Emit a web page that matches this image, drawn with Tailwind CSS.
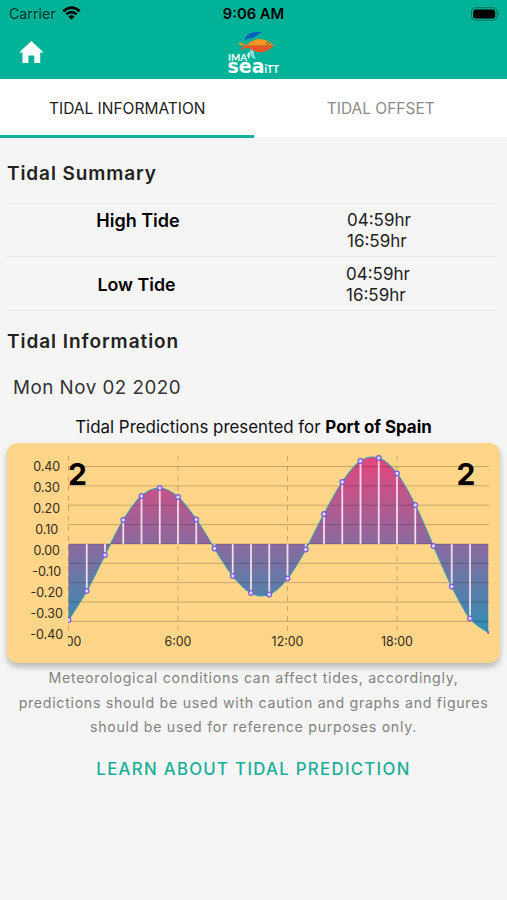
<!DOCTYPE html>
<html lang="en">
<head>
<meta charset="utf-8">
<title>Tidal Information</title>
<script src="https://cdn.jsdelivr.net/npm/@tailwindcss/browser@4"></script>
</head>
<body class="bg-[#f5f5f5] font-['Inter',sans-serif] text-black">
<main class="flex h-[900px] w-[507px] flex-col overflow-hidden">
  <header class="h-[79px] shrink-0 bg-[#00b398]">
    <div class="grid h-[27px] grid-cols-3 items-center px-[9px] text-[15px]">
      <div class="flex items-center gap-[6px] pt-[1px] text-[#10332e]"><span class="text-[14.2px]">Carrier</span>
        <svg class="-mt-[2px] h-[14px] w-[19px]" viewBox="0 0 19 14"><g fill="none" stroke="#000" stroke-width="2.7"><path d="M1.3 5.2Q9.5-2 17.7 5.2"/><path d="M4.3 8.3Q9.5 3.8 14.7 8.3"/></g><path d="M9.5 13.7L6.4 10.5Q9.5 8 12.6 10.5Z"/></svg>
      </div>
      <span class="pt-[2px] text-center text-[14.8px] font-semibold whitespace-nowrap">9:06 AM</span>
      <svg class="-mr-[2px] h-[14px] w-[30px] justify-self-end" viewBox="0 0 30 14"><rect x="1.5" y=".7" width="25.5" height="12.6" rx="3.8" fill="none" stroke="#07705f"/><rect x="3.2" y="2.5" width="22" height="9" rx="2.3"/><path d="M28 4.8Q30 7 28 9.2Z" fill="#07705f"/></svg>
    </div>
    <div class="grid h-[52px] grid-cols-3 px-[19px]">
      <svg class="mt-[14px] h-[23px] w-[25px]" viewBox="0 0 25 23"><path fill="#fff" d="M12.4 0L.1 11.5H3.5V22H9.4V14.5H15.3V22H21.2V11.5H24.6Z"/></svg>
      <svg class="h-[52px] w-[60px] justify-self-center" viewBox="-3 0 60 52">
        <path fill="#0b62bd" d="M18.500 14C19 8 25 3.500 36 5.500C31 7.500 30 10.500 25 11Q21 11.500 18.500 14Z"/>
        <path fill="#8ce0dc" d="M24.500 22L28 24Q27 28 30 32L26.500 31L24 26Z"/><path fill="#c7f4ef" d="M21 28Q23 23 24 26V30L22.500 32Z"/>
        <path fill="#f79420" d="M13 15L16 16L20.500 18Q33 6 48 18.500H18L13.500 18Z"/>
        <path fill="#ef5423" d="M14 23L18 18.500H48Q36 31 22 20.500L18 22Z"/>
        <circle cx="42" cy="16.300" r="1.500" fill="#7b5c28"/><circle cx="42" cy="16.300" r=".6" fill="#fff"/>
        <g fill="#fff" font-family="Lato,sans-serif" font-weight="700"><text x="2" y="33.500" font-size="10" textLength="19" lengthAdjust="spacingAndGlyphs">IMA</text><text x="1.500" y="46" font-family="DejaVu Sans" font-size="20" textLength="37" lengthAdjust="spacingAndGlyphs">sea</text><text x="38.500" y="46" font-size="12" textLength="14.500" lengthAdjust="spacingAndGlyphs">iTT</text></g>
      </svg>
    </div>
  </header>
  <nav class="grid h-[59px] shrink-0 grid-cols-2 bg-white text-center text-[15.5px] leading-[56px]">
    <div class="border-b-[3px] border-[#15b09b] pt-[3px] pl-[1px] leading-[53px] text-[#222]">TIDAL INFORMATION</div>
    <div class="border-b border-[#f5f5f5] pt-[3px] pl-[1px] leading-[53px] text-[#8b8b8b]">TIDAL OFFSET</div>
  </nav>
  <section class="px-[7px]">
    <h1 class="h-[66px] pt-[21px] text-[19px] leading-[30px] font-semibold tracking-[.9px] text-[#222]">Tidal Summary</h1>
    <div class="-mt-[1px] grid h-[54px] grid-cols-[262px_1fr] border-y border-[#e8e8e8]">
      <div class="pt-[3px] text-center text-[18px] leading-7 font-semibold">High Tide</div>
      <div class="pt-[6px] pl-[78px] text-[17px] leading-[20.7px] text-[#222]">04:59hr<br>16:59hr</div>
    </div>
    <div class="grid h-[54px] grid-cols-[259px_1fr] border-b border-[#e8e8e8]">
      <div class="pt-[14px] text-center text-[17.8px] leading-7 font-semibold">Low Tide</div>
      <div class="pt-[7px] pl-[80px] text-[17px] leading-[20.7px] text-[#222]">04:59hr<br>16:59hr</div>
    </div>
    <h2 class="pt-[16px] text-[19px] leading-[29px] font-semibold tracking-[.95px] text-[#222]">Tidal Information</h2>
    <p class="pt-[18px] pl-[6px] text-[18.8px] leading-[28px] tracking-[.5px] text-[#333]">Mon Nov 02 2020</p>
    <p class="h-[41px] pt-[13px] text-center text-[16.9px] leading-6 whitespace-nowrap text-[#111]">Tidal Predictions presented for <b class="font-bold text-black">Port of Spain</b></p>
    <div class="h-[220px] rounded-[11px] bg-[#ffd58a] shadow-[0_4px_6px_rgba(0,0,0,.25)]">
      <svg class="block h-[220px] w-[493px]" viewBox="7 443 493 220">
        <defs><linearGradient id="tide" gradientUnits="userSpaceOnUse" x1="0" x2="0" y1="457" y2="633"><stop stop-color="#e7457c"/><stop offset=".5" stop-color="#8a6a9f"/><stop offset="1" stop-color="#2e8fb4"/></linearGradient><clipPath id="plot"><rect x="68" y="443" width="421" height="220"/></clipPath></defs>
        <g id="chart" clip-path="url(#plot)"></g>
        <g id="axis" font-size="12.5" fill="#352b18" text-anchor="middle"></g>
        <g font-size="12.4" fill="#352b18" text-anchor="middle"><text x="178" y="645.5">6:00</text><text x="287.5" y="645.5">12:00</text><text x="397" y="645.5">18:00</text><text x="73.5" y="645.5" clip-path="url(#plot)">00</text></g>
        <g font-size="30" font-weight="700"><text x="68" y="484.5">2</text><text x="456.5" y="484.5">2</text></g>
      </svg>
    </div>
    <p class="pt-[3px] text-center text-[14.2px] leading-[24.5px] tracking-[.7px] whitespace-nowrap text-[#828282]">Meteorological conditions can affect tides, accordingly,<br>predictions should be used with caution and graphs and figures<br>should be used for reference purposes only.</p>
    <a class="block pt-[15px] text-center text-[16.8px] leading-7 font-medium tracking-[1.3px] text-[#18af98]">LEARN ABOUT TIDAL PREDICTION</a>
  </section>
</main>
<script>
const levels=[620,591,555,520,496,488,497,519.5,548.5,576,593,594.5,578.5,549.5,514,482,461,458,473.5,505,546,586.5,618.5,632.5];
const p=levels.map((y,i)=>[68.5+i*18.25,y]);
let d='';
for(let i=0;i<p.length-1;i++){
  const a=p[i-1]||p[i],b=p[i],c=p[i+1],e=p[i+2]||c;
  d+=`C${b[0]+(c[0]-a[0])/6} ${b[1]+(c[1]-a[1])/6} ${c[0]-(e[0]-b[0])/6} ${c[1]-(e[1]-b[1])/6} ${c[0]} ${c[1]}`;
}
let s=`<path fill="url(#tide)" d="M68.5 544V620${d}V544Z"/>`;
for(let i=0;i<9;i++) s+=`<path stroke="#000" stroke-opacity=".22" d="M68 ${466.5+i*19.36}H489"/>`;
for(const x of [68.5,178,287.5,397]) s+=`<path stroke="#000" stroke-opacity=".22" stroke-dasharray="5 5" d="M${x} 456V634"/>`;
s+=`<path fill="none" stroke="#3e96ad" stroke-width="1.1" d="M68.5 620${d}"/>`;
p.forEach(([x,y],i)=>{
  if(i&&i<23) s+=`<path stroke="#f2dcec" stroke-width="1.8" d="M${x} 544V${y}"/>`;
  s+=`<circle cx="${x}" cy="${y}" r="${i===23?.8:2.3}" fill="#d9d8ff" stroke="#7858df" stroke-width="1.2"/>`;
});
document.getElementById('chart').innerHTML=s;
document.getElementById('axis').innerHTML=['0.40','0.30','0.20','0.10','0.00','-0.10','-0.20','-0.30','-0.40'].map((t,i)=>`<text x="46.7" y="${471.3+i*20.9}">${t}</text>`).join('');
</script>
</body>
</html>
